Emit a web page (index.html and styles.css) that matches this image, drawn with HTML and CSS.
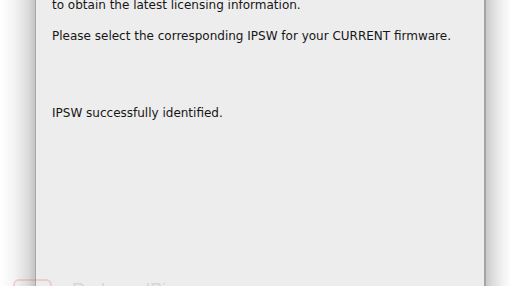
FILE: index.html
```html
<!DOCTYPE html>
<html>
<head>
<meta charset="utf-8">
<link rel="stylesheet" href="styles.css">
</head>
<body>
<div class="desk">
  <div class="shadow-left"></div>
  <div class="panel">
    <p class="line first">to obtain the latest licensing information.</p>
    <p class="line second">Please select the corresponding IPSW for your CURRENT firmware.</p>
    <p class="line status">IPSW successfully identified.</p>
  </div>
  <div class="shadow-right"></div>
  <div class="watermark"><span class="wm-box"></span><span class="wm-text">RedmondPie</span></div>
</div>
</body>
</html>
```
FILE: styles.css
```css
html, body {
  margin: 0;
  padding: 0;
  width: 510px;
  height: 286px;
  overflow: hidden;
  background: #ffffff;
}
.desk {
  position: relative;
  display: flex;
  width: 510px;
  height: 286px;
  overflow: hidden;
}
.shadow-left {
  width: 35px;
  flex: none;
  background: linear-gradient(to right, #ffffff 0%, #f4f4f4 40%, #dcdcdc 80%, #c4c4c4 100%);
}
.panel {
  flex: 1;
  background: #ededed;
  border-left: 1px solid #a8a8a8;
  border-right: 2px solid #a4a4a4;
  padding: 0 0 0 16px;
  font-family: "DejaVu Sans", Verdana, sans-serif;
  font-size: 12px;
  color: #161616;
}
.shadow-right {
  width: 24px;
  flex: none;
  background: linear-gradient(to right, #c9c9c9 0%, #dedede 30%, #f2f2f2 70%, #fcfcfc 100%);
}
.line {
  margin: 0;
  line-height: 16px;
  white-space: nowrap;
}
.first { margin-top: -3px; }
.second { margin-top: 15px; }
.status { margin-top: 61px; }
.watermark {
  position: absolute;
  left: 13px;
  top: 279px;
  display: flex;
  align-items: flex-start;
  gap: 20px;
  opacity: 0.22;
}
.wm-box {
  width: 35px;
  height: 20px;
  border: 2px solid #e05a5a;
  border-radius: 6px;
}
.wm-text {
  font-family: "Liberation Sans", sans-serif;
  font-size: 18px;
  line-height: 18px;
  color: #888;
  margin-top: 2px;
}
```
